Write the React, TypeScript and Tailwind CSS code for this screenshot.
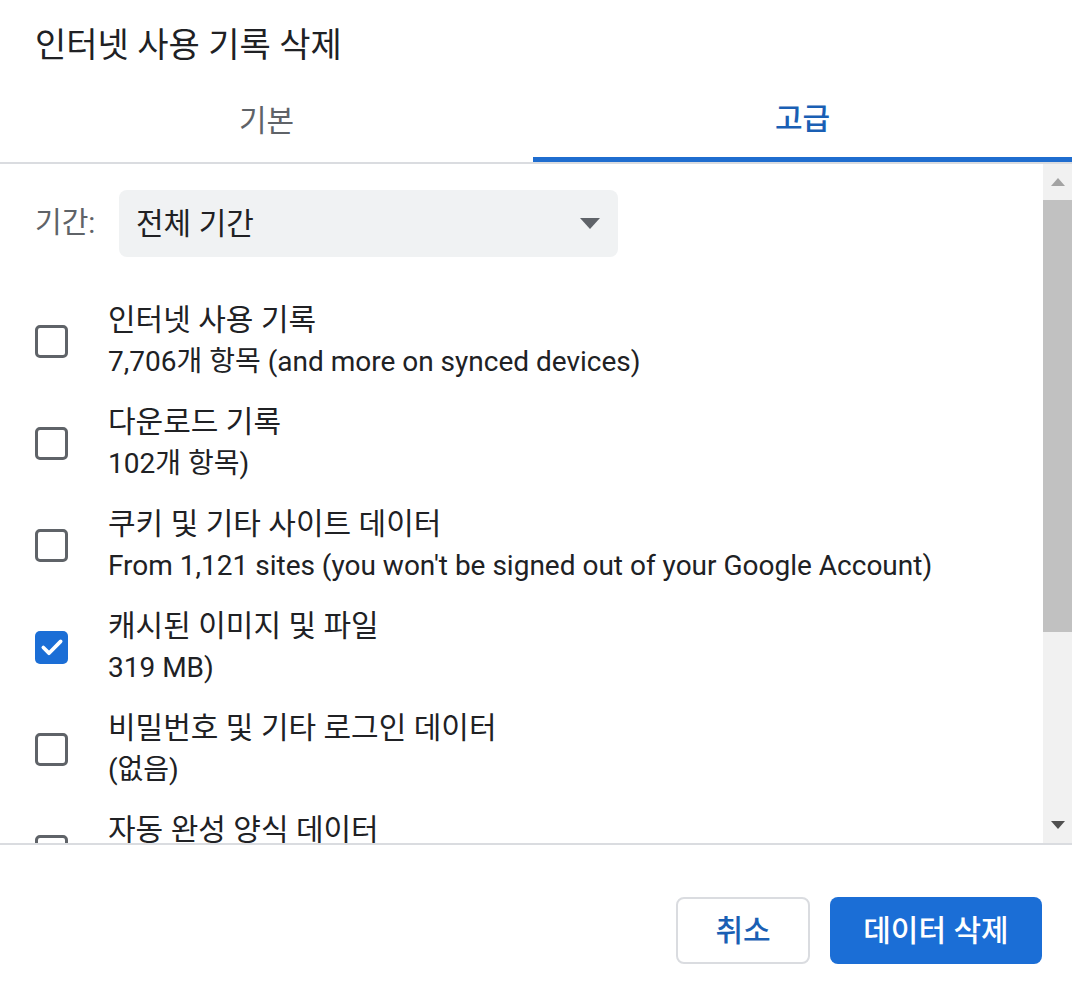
import React from "react";

const FONT = { fontFamily: 'Roboto, "Noto Sans CJK KR", sans-serif' };

function Checkbox({ checked }: { checked?: boolean }) {
  if (checked) {
    return (
      <div className="w-[33px] h-[33px] rounded-[5px] bg-[#1b6ed6] flex items-center justify-center shrink-0">
        <svg width="26" height="26" viewBox="0 0 24 24" fill="none">
          <path d="M4 12.5l5.2 5.2L20 6.8" stroke="white" strokeWidth="3.4" strokeLinecap="round" strokeLinejoin="round" />
        </svg>
      </div>
    );
  }
  return <div className="w-[33px] h-[33px] rounded-[5px] border-[3px] border-[#5f6368] shrink-0" />;
}

const items: { title: string; sub: string; checked?: boolean }[] = [
  { title: "인터넷 사용 기록", sub: "7,706개 항목 (and more on synced devices)" },
  { title: "다운로드 기록", sub: "102개 항목)" },
  { title: "쿠키 및 기타 사이트 데이터", sub: "From 1,121 sites (you won't be signed out of your Google Account)" },
  { title: "캐시된 이미지 및 파일", sub: "319 MB)", checked: true },
  { title: "비밀번호 및 기타 로그인 데이터", sub: "(없음)" },
  { title: "자동 완성 양식 데이터", sub: "" },
];

export default function App() {
  return (
    <div className="w-[1072px] h-[992px] bg-white flex flex-col overflow-hidden text-[#202124]" style={FONT}>
      <div className="pl-[35px] pt-[25px] h-[78px] text-[34px] leading-[40px]">인터넷 사용 기록 삭제</div>
      <div className="flex h-[84px]">
        <div className="w-[533px] flex flex-col">
          <div className="flex-1 flex items-center justify-center text-[30px] text-[#5f6368] pt-[1px]">기본</div>
        </div>
        <div className="flex-1 flex flex-col">
          <div className="flex-1 flex items-center justify-center text-[30px] text-[#1a5fb4] font-medium pt-[1px]">고급</div>
          <div className="h-[5px] bg-[#1f6dcf]" />
        </div>
      </div>
      <div className="h-[2px] bg-[#dadce0]" />
      <div className="flex h-[679px] overflow-hidden">
        <div className="flex-1 overflow-hidden pl-[35px] pt-[26px]">
          <div className="flex items-center">
            <div className="text-[29px] text-[#5f6368] w-[84px]">기간:</div>
            <div className="w-[499px] h-[67px] rounded-[8px] bg-[#f0f2f3] flex items-center pl-[17px] pr-[18px]">
              <span className="flex-1 text-[30px]">전체 기간</span>
              <svg width="20" height="11" viewBox="0 0 20 11">
                <path d="M0 0h20L10 11z" fill="#5f6368" />
              </svg>
            </div>
          </div>
          <div className="flex flex-col gap-[18px] mt-[42px]">
            {items.map((it, i) => (
              <div key={i} className="flex items-center h-[84px] shrink-0">
                <div className="w-[73px] flex">
                  <Checkbox checked={it.checked} />
                </div>
                <div className="flex flex-col h-[84px]">
                  <div className="text-[30px] leading-[42px] whitespace-nowrap">{it.title}</div>
                  <div className="text-[28px] leading-[42px] h-[42px] whitespace-nowrap">{it.sub}</div>
                </div>
              </div>
            ))}
          </div>
        </div>
        <div className="w-[29px] bg-[#f1f1f1] flex flex-col items-stretch">
          <div className="h-[36px] flex items-center justify-center">
            <svg width="14" height="8" viewBox="0 0 14 8">
              <path d="M0 8h14L7 0z" fill="#a3a3a3" />
            </svg>
          </div>
          <div className="h-[432px] bg-[#c1c1c1]" />
          <div className="flex-1" />
          <div className="h-[36px] flex items-center justify-center">
            <svg width="14" height="8" viewBox="0 0 14 8">
              <path d="M0 0h14L7 8z" fill="#505050" />
            </svg>
          </div>
        </div>
      </div>
      <div className="h-[2px] bg-[#dadce0]" />
      <div className="flex-1 flex justify-end items-start pt-[52px] pr-[30px] gap-[20px]">
        <button className="w-[134px] h-[67px] rounded-[8px] border-2 border-[#dadce0] text-[30px] text-[#1a5fb4] font-medium bg-white">취소</button>
        <button className="w-[212px] h-[67px] rounded-[8px] bg-[#1b6ed6] text-[30px] text-white font-medium">데이터 삭제</button>
      </div>
    </div>
  );
}
